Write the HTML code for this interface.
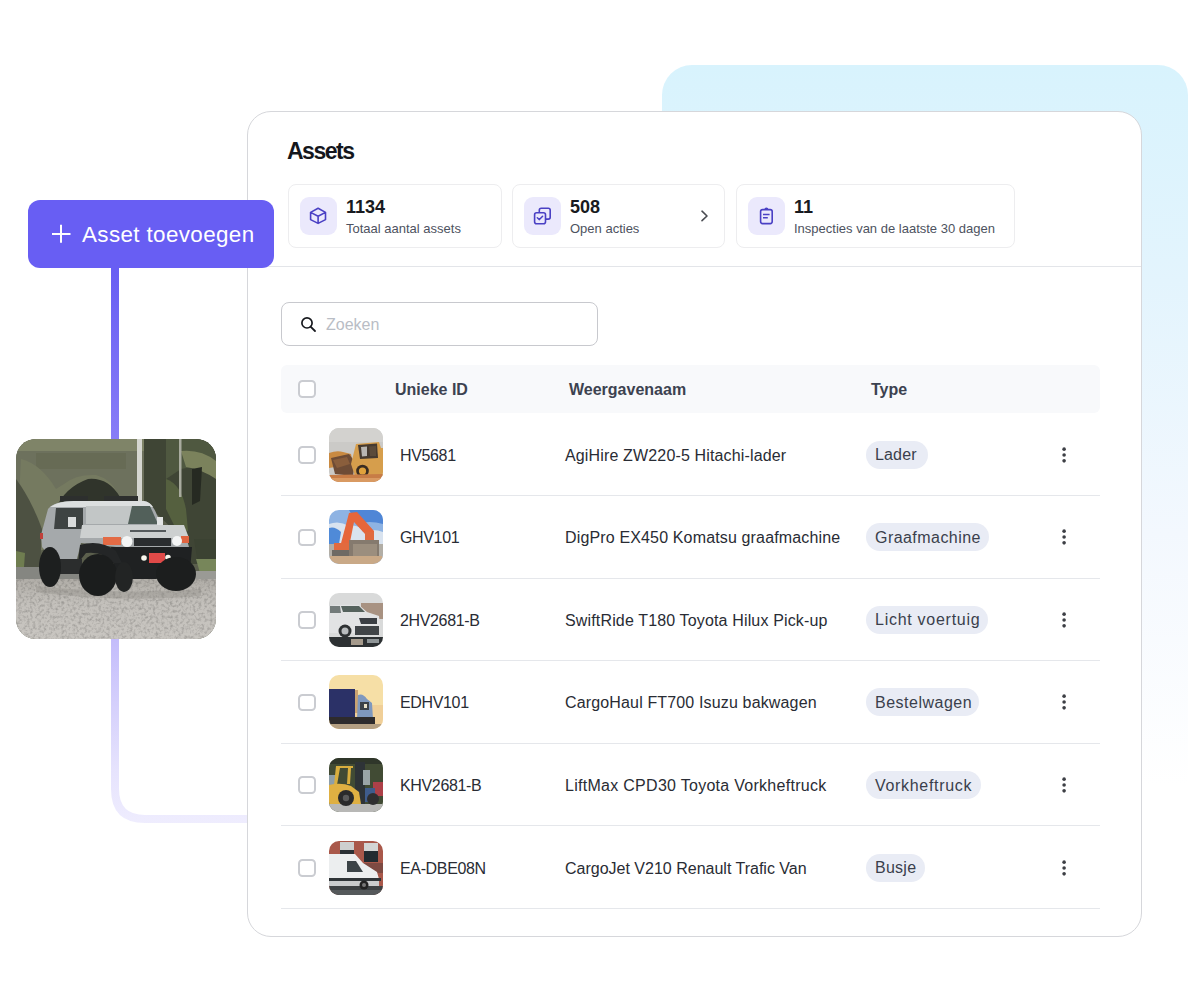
<!DOCTYPE html>
<html>
<head>
<meta charset="utf-8">
<style>
*{box-sizing:border-box;margin:0;padding:0}
html,body{width:1200px;height:1000px;overflow:hidden;background:#fff}
body{position:relative;font-family:"Liberation Sans",sans-serif;color:#1f2430}
.abs{position:absolute}
.bluebg{left:662px;top:65px;width:526px;height:720px;border-radius:30px 30px 0 0;
  background:linear-gradient(180deg,#d8f3fd 0%,#e3f4fd 30%,#f3f8fe 65%,rgba(255,255,255,0) 100%)}
.card{left:247px;top:111px;width:895px;height:826px;border:1px solid #d6d7db;border-radius:24px;background:#fff}
.title{left:287px;top:138.3px;font-size:23px;font-weight:bold;color:#14161c;line-height:26px;letter-spacing:-1.5px}
.stat{top:184px;height:63.5px;border:1px solid #ededef;border-radius:8px;background:#fff}
.ibg{width:36.5px;height:38px;top:197px;border-radius:9px;background:#ebe9fc}
.num{font-size:18px;font-weight:bold;color:#181a20;line-height:20px}
.lbl{font-size:13px;color:#4d5260;line-height:16px}
.divider{left:248px;top:266px;width:893px;height:1px;background:#e3e5e9}
.btn{left:28px;top:200px;width:246px;height:68px;border-radius:12px;background:#685ef3;color:#fff}
.search{left:281px;top:302px;width:317px;height:44px;border:1px solid #c8c9ce;border-radius:8px}
.thead{left:281px;top:365px;width:819px;height:48px;background:#f8f9fb;border-radius:6px}
.cb{width:18px;height:17.5px;border:2px solid #caccd1;border-radius:4.5px;background:#fff}
.hd{font-size:16px;font-weight:bold;color:#3c4250;line-height:18px}
.row{left:281px;width:819px;height:1px;background:#e5e7eb}
.cell{font-size:16px;color:#292c34;line-height:18px;white-space:nowrap}
.thumb{left:329px;width:54px;height:54px;border-radius:10px;overflow:hidden}
.pill{height:28px;border-radius:14px;background:#e9ecf5;font-size:16px;color:#3a3f4c;line-height:28px;padding:0 10px;white-space:nowrap}
.dots{left:1062px;width:4px}
.dots i{display:block;width:4px;height:4px;border-radius:2px;background:#3b3f48;margin-bottom:2.5px}
</style>
</head>
<body>
<div class="abs bluebg"></div>

<!-- connector -->
<svg class="abs" style="left:0;top:0" width="1200" height="1000">
  <defs>
    <linearGradient id="lg1" x1="0" y1="268" x2="0" y2="825" gradientUnits="userSpaceOnUse">
      <stop offset="0" stop-color="#685ef3"/>
      <stop offset="0.31" stop-color="#887df7"/>
      <stop offset="0.67" stop-color="#c4bdfb"/>
      <stop offset="0.9" stop-color="#e6e3fd"/>
      <stop offset="1" stop-color="#efedfe"/>
    </linearGradient>
  </defs>
  <path d="M115 260 L115 789 Q115 819 145 819 L248 819" fill="none" stroke="url(#lg1)" stroke-width="8"/>
</svg>

<!--PHOTO-->
<div class="abs" style="left:16px;top:439px;width:200px;height:200px;border-radius:20px;overflow:hidden"><svg width="200" height="200" viewBox="0 0 200 200">
<defs>
<linearGradient id="gr" x1="0" y1="0" x2="0" y2="1">
<stop offset="0" stop-color="#b0ada7"/><stop offset="0.4" stop-color="#c3c0bb"/><stop offset="1" stop-color="#c9c6c1"/>
</linearGradient>
<filter id="nz" x="0" y="0" width="100%" height="100%">
<feTurbulence type="fractalNoise" baseFrequency="0.35" numOctaves="2" seed="7" result="t"/>
<feColorMatrix in="t" type="matrix" values="0 0 0 0 0  0 0 0 0 0  0 0 0 0 0  0 0 0 -2.2 1.25"/>
<feComposite in2="SourceGraphic" operator="in"/>
</filter>
</defs>
<rect width="200" height="200" fill="#5b5f4d"/>
<path d="M0 0H128V66L100 64L62 58L35 75L28 110L0 115Z" fill="#6d715d"/>
<path d="M0 0H128V12H0Z" fill="#7f8468"/>
<path d="M20 14H110V30H20Z" fill="#676b55"/>
<path d="M5 20Q25 25 40 50L48 45Q60 35 80 36Q95 40 102 55L110 66H96Q90 48 78 48Q62 48 52 60L45 66L35 80L30 110L0 118Z" fill="#757a60"/>
<path d="M36 80Q44 50 72 40Q92 38 104 58L108 66H46Z" fill="#30342b"/>
<path d="M0 40Q15 60 26 90L24 130H0Z" fill="#4d5142"/>
<path d="M0 112L9 114L8 128L0 130Z" fill="#6f7d50"/>
<path d="M128 0H200V125H175L165 98L142 76L128 70Z" fill="#3f4535"/>
<path d="M150 0H200V35Q185 25 165 30L150 40Z" fill="#4f5840"/>
<path d="M165 12Q185 10 200 22V40Q185 30 170 28Z" fill="#7b825c"/>
<path d="M176 30L186 28L184 62L176 66Z" fill="#262a22"/>
<path d="M150 40Q165 45 170 70L172 92L160 90L150 70Z" fill="#55603f"/>
<path d="M178 100H200V122L182 125Z" fill="#3b4232"/>
<path d="M180 120H200V134H184Z" fill="#77865a"/>
<path d="M121 0H126V63H121Z" fill="#d5d6d0"/>
<path d="M163 0H165.5V58H163Z" fill="#a9ab9f"/>
<path d="M0 128H70V146H0Z" fill="#858681"/><path d="M70 132H200V146H70Z" fill="#9a9a95"/>
<rect y="140" width="200" height="60" fill="url(#gr)"/>
<rect y="140" width="200" height="60" fill="#6b6862" filter="url(#nz)" opacity="0.2"/>
<path d="M44 57H72V62H44ZM88 57H122V62H88Z" fill="#2d2f2e"/>
<path d="M32 70Q38 62 58 62H128Q136 63 141 76L146 86L168 91L173 108H100L65 104L60 124H40L26 108L25 96Z" fill="#a5a9ab"/>
<path d="M34 68Q42 62 58 62H128Q134 63 137 68H36Z" fill="#dcdfdf"/>
<path d="M40 69H67V90H38Z" fill="#3e4342"/>
<path d="M52 78H60V88H52Z" fill="#dadcdc"/>
<path d="M70 67H134L142 85H70Z" fill="#52605a"/>
<path d="M70 67H116L112 85H70Z" fill="#c2c6c6"/>
<path d="M141 78H147V86H141Z" fill="#e2e4e4"/>
<path d="M66 86H168L173 99H64Z" fill="#cdd0d0"/>
<path d="M114 91H150V93H114Z" fill="#555a5c"/>
<path d="M118 99H155V107H118Z" fill="#2a2d2f"/>
<path d="M87 98H105V106H87Z" fill="#e36b45"/>
<path d="M165 97H173V104H165Z" fill="#e0643f"/>
<circle cx="111" cy="102.5" r="5.5" fill="#f4f5f5"/>
<circle cx="161" cy="102" r="5" fill="#f4f5f5"/>
<path d="M24 94H27V100H24Z" fill="#c0403a"/>
<path d="M95 108H176L174 132L140 140H100Z" fill="#1f2122"/>
<path d="M64 106Q84 100 100 112L106 124H96Q88 112 70 114L62 124Z" fill="#242627"/>
<path d="M133 114H149V124H133Z" fill="#e04a48"/>
<circle cx="128" cy="119" r="2.8" fill="#f7f6ec"/>
<circle cx="152" cy="118.5" r="2.8" fill="#f7f6ec"/>
<path d="M42 120H66V135H42Z" fill="#2b2d2d"/><path d="M20 147Q100 156 185 150L185 157Q100 164 20 153Z" fill="#8c8a85" opacity="0.35"/>
<ellipse cx="34" cy="128" rx="11" ry="20" fill="#1d1f1f"/>
<ellipse cx="82" cy="136" rx="19" ry="21" fill="#1b1d1d"/>
<ellipse cx="160" cy="135" rx="20" ry="17" fill="#1c1e1e"/>
<ellipse cx="108" cy="138" rx="9" ry="15" fill="#222424"/>
</svg></div>
<!--/PHOTO-->
<div class="abs card"></div>
<div class="abs title">Assets</div>

<!-- stats -->
<div class="abs stat" style="left:288px;width:214px"></div>
<div class="abs ibg" style="left:300px"></div>
<div class="abs num" style="left:346px;top:197px">1134</div>
<div class="abs lbl" style="left:346px;top:221px">Totaal aantal assets</div>

<div class="abs stat" style="left:512px;width:213px"></div>
<div class="abs ibg" style="left:524px"></div>
<div class="abs num" style="left:570px;top:197px">508</div>
<div class="abs lbl" style="left:570px;top:221px">Open acties</div>

<div class="abs stat" style="left:736px;width:279px"></div>
<div class="abs ibg" style="left:748px"></div>
<div class="abs num" style="left:794px;top:197px">11</div>
<div class="abs lbl" style="left:794px;top:221px">Inspecties van de laatste 30 dagen</div>


<svg class="abs" style="left:300px;top:197px" width="37" height="38" viewBox="300 197 37 38">
 <path d="M318.1 208.3L325.5 212.4V219.6L318.1 223.4L310.6 219.6V212.4Z M310.6 212.4L318.1 216.2L325.5 212.4 M318.1 216.2V223.4" fill="none" stroke="#4a40c4" stroke-width="1.6" stroke-linejoin="round"/>
</svg>
<svg class="abs" style="left:524px;top:197px" width="37" height="38" viewBox="524 197 37 38">
 <path d="M539.3 212.4V210.2Q539.3 208.3 541.2 208.3H548.3Q550.2 208.3 550.2 210.2V217.2Q550.2 219.1 548.3 219.1H545.5" fill="none" stroke="#4a40c4" stroke-width="1.6"/>
 <rect x="534.6" y="212.8" width="10.9" height="11" rx="2" fill="none" stroke="#4a40c4" stroke-width="1.6"/>
 <path d="M537.3 217.8L539.4 219.6L542.6 216.2" fill="none" stroke="#4a40c4" stroke-width="1.5" stroke-linecap="round" stroke-linejoin="round"/>
</svg>
<svg class="abs" style="left:748px;top:197px" width="37" height="38" viewBox="748 197 37 38">
 <rect x="760.6" y="209.6" width="11.6" height="14" rx="2" fill="none" stroke="#4a40c4" stroke-width="1.6"/>
 <path d="M764.4 209.6Q764.4 207.4 766.4 207.4Q768.4 207.4 768.4 209.6Z" fill="#4a40c4"/>
 <path d="M763 214.6H769.6M763 217.8H767.8" fill="none" stroke="#4a40c4" stroke-width="1.5"/>
</svg>
<svg class="abs" style="left:690px;top:200px" width="30" height="32" viewBox="690 200 30 32">
 <path d="M702 211.2L707 216L702 220.7" fill="none" stroke="#4a4c52" stroke-width="1.6" stroke-linecap="round" stroke-linejoin="round"/>
</svg>
<svg class="abs" style="left:292px;top:310px" width="32" height="30" viewBox="292 310 32 30">
 <circle cx="307" cy="322.9" r="5.1" fill="none" stroke="#17191e" stroke-width="1.7"/>
 <path d="M310.8 326.8L315 331" stroke="#17191e" stroke-width="1.8" stroke-linecap="round"/>
</svg>
<div class="abs divider"></div>

<div class="abs btn"></div>
<div class="abs" id="btxt" style="left:82px;top:222px;font-size:22.4px;color:#fff;line-height:26px;letter-spacing:0.38px">Asset toevoegen</div>
<svg class="abs" style="left:50px;top:223px" width="22" height="22"><path d="M2 11H20.5M11 1.7V19.8" stroke="#fff" stroke-width="2" fill="none"/></svg>

<div class="abs search"></div>
<div class="abs" style="left:326px;top:316px;font-size:16px;color:#b9bdc5;line-height:18px">Zoeken</div>

<div class="abs thead"></div>
<div class="abs cb" style="left:298px;top:380px"></div>
<div class="abs hd" style="left:395px;top:381px">Unieke ID</div>
<div class="abs hd" style="left:569px;top:381px">Weergavenaam</div>
<div class="abs hd" style="left:871px;top:381px">Type</div>

<!--ROWS-->
<div class="abs cb" style="left:298px;top:446.0px"></div>
<div class="abs thumb" id="th0" style="top:427.5px"><svg width="54" height="54" viewBox="0 0 54 54">
<rect width="54" height="54" fill="#cbcac7"/>
<rect y="0" width="54" height="14" fill="#d3d2cf"/>
<path d="M0 25Q8 22 14 24L22 26L24 36L0 40Z" fill="#c98a42"/>
<path d="M2 30L20 26L26 34L24 48L6 46Z" fill="#6e4c36"/>
<path d="M4 32L18 29L21 36L8 40Z" fill="#8a5e3c"/>
<path d="M27 16L50 14L52 20L54 20V48L26 48L22 36Z" fill="#d69e4c"/>
<path d="M29 17L48 15.5L49 30L31 31Z" fill="#463a30"/>
<path d="M32 19L38 18.5L38 28L33 28.5Z" fill="#b9b6b2"/>
<path d="M40 18.5L47 18L47 28L41 28Z" fill="#5a4a3a"/>
<circle cx="33.5" cy="43" r="6.3" fill="#392c22"/>
<circle cx="33.5" cy="43" r="3.6" fill="#e0a23c"/>
<path d="M0 47L54 46V54H0Z" fill="#c77c46"/>
<path d="M0 50L54 50V54H0Z" fill="#d99a62"/>
</svg></div>
<div class="abs cell" style="left:400px;top:446.5px;letter-spacing:-0.35px">HV5681</div>
<div class="abs cell" style="left:565px;top:446.5px;letter-spacing:0.15px">AgiHire ZW220-5 Hitachi-lader</div>
<div class="abs pill" style="left:866px;top:440.5px;width:62px;padding-left:9px;padding-top:0.7px;letter-spacing:0.15px">Lader</div>
<svg class="abs" style="left:1060px;top:444.5px" width="8" height="20"><circle cx="4.1" cy="4.15" r="1.8" fill="#3d3f45"/><circle cx="4.1" cy="10" r="1.8" fill="#3d3f45"/><circle cx="4.1" cy="15.85" r="1.8" fill="#3d3f45"/></svg>
<div class="abs row" style="top:495.0px"></div>
<div class="abs cb" style="left:298px;top:528.6px"></div>
<div class="abs thumb" id="th1" style="top:510.1px"><svg width="54" height="54" viewBox="0 0 54 54">
<rect width="54" height="54" fill="#8eb3e3"/>
<path d="M20 0H54V14Q40 10 28 14Z" fill="#4f86d6"/>
<path d="M0 14Q10 10 20 16Q30 14 34 22Q44 18 54 22V36H0Z" fill="#d9e3ef"/>
<path d="M0 18Q6 16 12 22L10 34L0 36Z" fill="#4f8ad8"/>
<path d="M0 34H54V46H0Z" fill="#b2aea6"/>
<path d="M11 37L20 3L28 2L45 21L45 34L38 34L36 24L25 12L20 37Z" fill="#e6663b"/>
<path d="M36 22L45 22L45 34L36 34Z" fill="#e06a40"/>
<path d="M5 33H22V41H5Z" fill="#e26a3e"/>
<path d="M3 40H24V46H3Z" fill="#6e6a64"/>
<path d="M20 30H50V50H20Z" fill="#857a6e"/>
<path d="M24 34H48V48H24Z" fill="#9b8e7e"/>
<path d="M0 46H54V54H0Z" fill="#c9a987"/>
</svg></div>
<div class="abs cell" style="left:400px;top:529.1px;letter-spacing:-0.35px">GHV101</div>
<div class="abs cell" style="left:565px;top:529.1px;letter-spacing:0.15px">DigPro EX450 Komatsu graafmachine</div>
<div class="abs pill" style="left:866px;top:523.1px;width:123px;padding-left:9px;padding-top:0.7px;letter-spacing:0.45px">Graafmachine</div>
<svg class="abs" style="left:1060px;top:527.1px" width="8" height="20"><circle cx="4.1" cy="4.15" r="1.8" fill="#3d3f45"/><circle cx="4.1" cy="10" r="1.8" fill="#3d3f45"/><circle cx="4.1" cy="15.85" r="1.8" fill="#3d3f45"/></svg>
<div class="abs row" style="top:577.6px"></div>
<div class="abs cb" style="left:298px;top:611.2px"></div>
<div class="abs thumb" id="th2" style="top:592.7px"><svg width="54" height="54" viewBox="0 0 54 54">
<rect width="54" height="54" fill="#d9dada"/>
<path d="M32 10H54V26H32Z" fill="#a89282"/>
<path d="M0 13Q10 11 30 12L38 19L50 23L51 33L48 40L0 40Z" fill="#e2e3e4"/>
<path d="M12 13H30L36 19H14Z" fill="#55625d"/>
<path d="M1 13H11L12 20H1Z" fill="#737b7a"/>
<path d="M30 25H48L48 31H32Z" fill="#3b3f44"/>
<path d="M26 33H50V42H26Z" fill="#404447"/>
<circle cx="16" cy="38" r="6.5" fill="#2e3133"/>
<circle cx="16" cy="38" r="3.5" fill="#b9bcbe"/>
<path d="M0 44H54V54H0Z" fill="#2d3133"/>
<path d="M22 46H34V52H22Z" fill="#a59a8c"/>
<path d="M38 46H50V50H38Z" fill="#8f9597"/>
</svg></div>
<div class="abs cell" style="left:400px;top:611.7px;letter-spacing:-0.35px">2HV2681-B</div>
<div class="abs cell" style="left:565px;top:611.7px;letter-spacing:0.15px">SwiftRide T180 Toyota Hilux Pick-up</div>
<div class="abs pill" style="left:866px;top:605.7px;width:121.5px;padding-left:9px;padding-top:0.7px;letter-spacing:0.73px">Licht voertuig</div>
<svg class="abs" style="left:1060px;top:609.7px" width="8" height="20"><circle cx="4.1" cy="4.15" r="1.8" fill="#3d3f45"/><circle cx="4.1" cy="10" r="1.8" fill="#3d3f45"/><circle cx="4.1" cy="15.85" r="1.8" fill="#3d3f45"/></svg>
<div class="abs row" style="top:660.2px"></div>
<div class="abs cb" style="left:298px;top:693.8px"></div>
<div class="abs thumb" id="th3" style="top:675.3px"><svg width="54" height="54" viewBox="0 0 54 54">
<rect width="54" height="54" fill="#f6dfa6"/>
<path d="M0 30H54V54H0Z" fill="#f0cf98"/>
<path d="M0 14H26V45H0Z" fill="#2b3167"/>
<path d="M26 15H29V38H26Z" fill="#c9a272"/>
<path d="M29 20Q34 18 38 24L43 28L44 44H28Z" fill="#7f98be"/>
<path d="M31 27H40V35H31Z" fill="#3b4148"/>
<path d="M35 29H38V33H35Z" fill="#e8e0c8"/>
<path d="M0 42H46V50H0Z" fill="#2e2b2c"/>
<path d="M0 49H54V54H0Z" fill="#b49f82"/>
</svg></div>
<div class="abs cell" style="left:400px;top:694.3px;letter-spacing:-0.35px">EDHV101</div>
<div class="abs cell" style="left:565px;top:694.3px;letter-spacing:0.15px">CargoHaul FT700 Isuzu bakwagen</div>
<div class="abs pill" style="left:866px;top:688.3px;width:113px;padding-left:9px;padding-top:0.7px;letter-spacing:0.5px">Bestelwagen</div>
<svg class="abs" style="left:1060px;top:692.3px" width="8" height="20"><circle cx="4.1" cy="4.15" r="1.8" fill="#3d3f45"/><circle cx="4.1" cy="10" r="1.8" fill="#3d3f45"/><circle cx="4.1" cy="15.85" r="1.8" fill="#3d3f45"/></svg>
<div class="abs row" style="top:742.8px"></div>
<div class="abs cb" style="left:298px;top:776.4px"></div>
<div class="abs thumb" id="th4" style="top:757.9px"><svg width="54" height="54" viewBox="0 0 54 54">
<rect width="54" height="54" fill="#414b34"/>
<path d="M0 0H54V6H0Z" fill="#2f362a"/>
<path d="M0 17H8V28H0Z" fill="#8d9ea8"/>
<path d="M44 24H54V38H44Z" fill="#ad4048"/>
<path d="M26 4H36V46H26Z" fill="#2e3337"/>
<path d="M34 12H41V27H34Z" fill="#9aa4a7"/>
<path d="M7 8H24V10H22L21 26H18L19 10H11L8 27H5Z" fill="#d8ae3e"/>
<path d="M0 27Q12 24 22 28L30 34L32 46H0Z" fill="#dfb042"/>
<path d="M36 30H46V44H36Z" fill="#3f5c8c"/>
<path d="M0 46H54V54H0Z" fill="#b8b8b6"/>
<circle cx="17" cy="40" r="8" fill="#2a2a2b"/>
<circle cx="17" cy="40" r="3.2" fill="#5a5a5a"/>
<circle cx="44" cy="41" r="6" fill="#2f2f30"/>
</svg></div>
<div class="abs cell" style="left:400px;top:776.9px;letter-spacing:-0.35px">KHV2681-B</div>
<div class="abs cell" style="left:565px;top:776.9px;letter-spacing:0.28px">LiftMax CPD30 Toyota Vorkheftruck</div>
<div class="abs pill" style="left:866px;top:770.9px;width:115px;padding-left:9px;padding-top:0.7px;letter-spacing:0.68px">Vorkheftruck</div>
<svg class="abs" style="left:1060px;top:774.9px" width="8" height="20"><circle cx="4.1" cy="4.15" r="1.8" fill="#3d3f45"/><circle cx="4.1" cy="10" r="1.8" fill="#3d3f45"/><circle cx="4.1" cy="15.85" r="1.8" fill="#3d3f45"/></svg>
<div class="abs row" style="top:825.4px"></div>
<div class="abs cb" style="left:298px;top:859.0px"></div>
<div class="abs thumb" id="th5" style="top:840.5px"><svg width="54" height="54" viewBox="0 0 54 54">
<rect width="54" height="54" fill="#a9584a"/>
<path d="M11 1H25V11H11Z" fill="#cdcfcf"/>
<path d="M11 9H25V14H11Z" fill="#2a3034"/>
<path d="M35 2H49V10H35Z" fill="#d3d5d4"/>
<path d="M35 10H49V21H35Z" fill="#222b30"/>
<path d="M32 22H54V32H32Z" fill="#7e4a42"/>
<path d="M0 13H26L34 22L48 31L50 38V44H0Z" fill="#eceeef"/>
<path d="M18 20H27L34 31H18Z" fill="#3b4347"/>
<path d="M0 37H52V40H0Z" fill="#2f3437"/>
<path d="M0 40H50V45H0Z" fill="#c9cbcc"/>
<path d="M0 45H54V54H0Z" fill="#3d4143"/>
<path d="M0 49H54V54H0Z" fill="#55595b"/>
<circle cx="35" cy="44" r="4.5" fill="#222"/>
<circle cx="35" cy="44" r="2" fill="#777"/>
</svg></div>
<div class="abs cell" style="left:400px;top:859.5px;letter-spacing:-0.35px">EA-DBE08N</div>
<div class="abs cell" style="left:565px;top:859.5px;letter-spacing:0.00px">CargoJet V210 Renault Trafic Van</div>
<div class="abs pill" style="left:866px;top:853.5px;width:59px;padding-left:9px;padding-top:0.7px;letter-spacing:0.25px">Busje</div>
<svg class="abs" style="left:1060px;top:857.5px" width="8" height="20"><circle cx="4.1" cy="4.15" r="1.8" fill="#3d3f45"/><circle cx="4.1" cy="10" r="1.8" fill="#3d3f45"/><circle cx="4.1" cy="15.85" r="1.8" fill="#3d3f45"/></svg>
<div class="abs row" style="top:908.0px"></div>
<!--/ROWS-->

</body>
</html>
